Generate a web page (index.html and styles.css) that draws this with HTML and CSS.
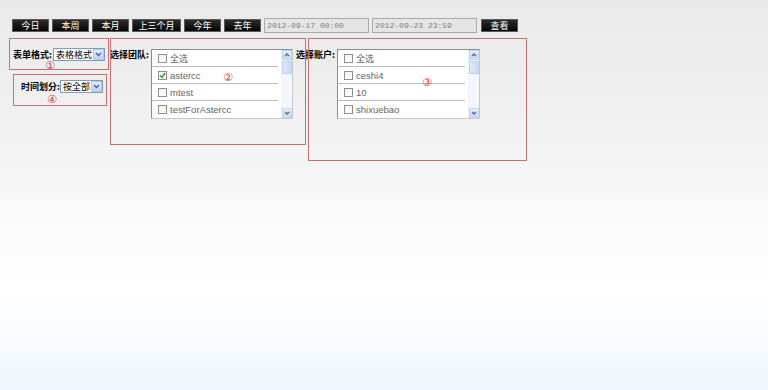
FILE: index.html
```html
<!DOCTYPE html>
<html lang="zh-CN">
<head>
    <meta charset="UTF-8">
    <title>报表查询</title>
    <link rel="stylesheet" href="styles.css">
</head>
<body>
    <div class="toolbar">
        <button class="btn">今日</button>
        <button class="btn">本周</button>
        <button class="btn">本月</button>
        <button class="btn btn-wide">上三个月</button>
        <button class="btn">今年</button>
        <button class="btn">去年</button>
        <span class="date">2012-09-17 00:00</span>
        <span class="date">2012-09-23 23:59</span>
        <button class="btn btn-go">查看</button>
    </div>

    <div class="filters">
        <div class="col-format">
            <div class="field">
                <label class="label label-format">表单格式:</label>
                <span class="combo">表格格式<i class="arrow"><svg width="7" height="5" viewBox="0 0 7 5"><path d="M1 1l2.5 2.5L6 1" stroke="#4a5f8a" stroke-width="1.4" fill="none"/></svg></i></span>
            </div>
            <div class="field field-time">
                <label class="label">时间划分:</label>
                <span class="combo">按全部<i class="arrow"><svg width="7" height="5" viewBox="0 0 7 5"><path d="M1 1l2.5 2.5L6 1" stroke="#4a5f8a" stroke-width="1.4" fill="none"/></svg></i></span>
            </div>
        </div>

        <div class="field-list">
            <label class="label list-label">选择团队:</label>
            <div class="listbox">
                <ul>
                    <li><span class="check"></span><span class="cjk">全选</span></li>
                    <li><span class="check checked"><svg width="7" height="7" viewBox="0 0 7 7"><path d="M1 3.5l2 2L6 1" stroke="#2f9a2f" stroke-width="1.4" fill="none"/></svg></span>astercc</li>
                    <li><span class="check"></span>mtest</li>
                    <li><span class="check"></span>testForAstercc</li>
                </ul>
                <div class="scroll">
                    <span class="sb-btn"><svg width="6" height="4" viewBox="0 0 6 4"><path d="M1 3l2-2 2 2" stroke="#4a6a9a" stroke-width="1.3" fill="none"/></svg></span>
                    <span class="sb-thumb"></span>
                    <span class="sb-track"></span>
                    <span class="sb-btn"><svg width="6" height="4" viewBox="0 0 6 4"><path d="M1 1l2 2 2-2" stroke="#4a6a9a" stroke-width="1.3" fill="none"/></svg></span>
                </div>
            </div>
        </div>

        <div class="field-list field-account">
            <label class="label list-label">选择账户:</label>
            <div class="listbox listbox-wide">
                <ul>
                    <li><span class="check"></span><span class="cjk">全选</span></li>
                    <li><span class="check"></span>ceshi4</li>
                    <li><span class="check"></span>10</li>
                    <li><span class="check"></span>shixuebao</li>
                </ul>
                <div class="scroll">
                    <span class="sb-btn"><svg width="6" height="4" viewBox="0 0 6 4"><path d="M1 3l2-2 2 2" stroke="#4a6a9a" stroke-width="1.3" fill="none"/></svg></span>
                    <span class="sb-thumb"></span>
                    <span class="sb-track"></span>
                    <span class="sb-btn"><svg width="6" height="4" viewBox="0 0 6 4"><path d="M1 1l2 2 2-2" stroke="#4a6a9a" stroke-width="1.3" fill="none"/></svg></span>
                </div>
            </div>
        </div>
    </div>

    <!-- annotation boxes drawn over the form -->
    <div class="mark mark-1"><span class="num">①</span></div>
    <div class="mark mark-2"><span class="num">②</span></div>
    <div class="mark mark-3"><span class="num">③</span></div>
    <div class="mark mark-4"><span class="num">④</span></div>
</body>
</html>
```

FILE: styles.css
```css
html {
    min-height: 100%;
    background: linear-gradient(to bottom, #e9e9e9 0, #f1f1f1 120px, #fafafa 220px, #ffffff 290px, #f0f7fe 390px);
}

body {
    position: relative;
    margin: 0;
    min-height: 390px;
    font-family: "Liberation Sans", "Noto Sans CJK SC", sans-serif;
}

.toolbar {
    display: flex;
    align-items: center;
    gap: 3px;
    height: 15px;
    padding: 18px 0 0 12px;
}

.btn {
    box-sizing: border-box;
    height: 13px;
    padding: 0 8.5px;
    background: linear-gradient(#2b2b2b, #050505);
    border: 1px solid #5a5a5a;
    color: #fff;
    font: 9px/11px "Noto Sans CJK SC", sans-serif;
    cursor: pointer;
}

.btn-wide {
    padding: 0 5.5px;
}

.btn-go {
    margin-left: 1px;
}

.date {
    box-sizing: border-box;
    width: 105px;
    height: 15px;
    padding-left: 2px;
    background: #e5e5e5;
    border: 1px solid #aaaaaa;
    color: #808080;
    font: 8px/13px "Liberation Mono", monospace;
}

.filters {
    display: flex;
    align-items: flex-start;
    margin-top: 15px;
}

.col-format {
    box-sizing: border-box;
    width: 110px;
    padding-left: 13px;
}

.field {
    display: flex;
    align-items: center;
    height: 13px;
}

.field-time {
    margin-top: 19px;
    padding-left: 8px;
}

.label {
    color: #000;
    font: bold 9px/10px "Noto Sans CJK SC", sans-serif;
    white-space: nowrap;
}

.label-format {
    width: 40px;
}

.combo {
    box-sizing: border-box;
    display: flex;
    align-items: center;
    height: 13px;
    padding-left: 2px;
    background: #fff;
    border: 1px solid #7f9db9;
    color: #000;
    font: 9px/11px "Noto Sans CJK SC", sans-serif;
    white-space: nowrap;
}

.arrow {
    display: flex;
    align-items: center;
    justify-content: center;
    width: 11px;
    height: 11px;
    margin-left: 1px;
    box-sizing: border-box;
    background: linear-gradient(#e4edfd, #bfd2f5);
    border: 1px solid #b4c8ef;
}

.field-list {
    display: flex;
    align-items: flex-start;
}

.field-account {
    margin-left: 3px;
}

.list-label {
    width: 41px;
    line-height: 13px;
}

.listbox {
    box-sizing: border-box;
    display: flex;
    width: 142px;
    height: 70px;
    margin-top: 1px;
    background: #fff;
    border: 1px solid #8c8c8c;
    border-right-color: #c9c9c9;
    border-bottom-color: #c9c9c9;
}

.listbox-wide {
    width: 143px;
}

.listbox ul {
    flex: 1;
    margin: 0 3px 0 0;
    padding: 0;
    list-style: none;
}

.listbox li {
    box-sizing: border-box;
    display: flex;
    align-items: center;
    gap: 3px;
    height: 17px;
    padding-left: 6px;
    border-bottom: 1px solid #b9b9b9;
    color: #666;
    font-size: 9.5px;
}

.listbox li:last-child {
    border-bottom: none;
}

.cjk {
    font-family: "Noto Sans CJK SC", sans-serif;
    font-size: 9px;
}

.check {
    box-sizing: border-box;
    display: flex;
    align-items: center;
    justify-content: center;
    width: 9px;
    height: 9px;
    background: linear-gradient(#f2f2f2, #fff);
    border: 1px solid #8f8f8f;
}

.scroll {
    display: flex;
    flex-direction: column;
    width: 10px;
    background: #f4f7fc;
    border-left: 1px solid #eef1f7;
}

.sb-btn {
    box-sizing: border-box;
    display: flex;
    align-items: center;
    justify-content: center;
    height: 10px;
    background: linear-gradient(#e6eefc, #c6d7f6);
    border: 1px solid #c4d4f1;
}

.sb-thumb {
    height: 13px;
    margin-top: 1px;
    background: linear-gradient(to right, #dce7fb, #c9daf7);
    border: 1px solid #c1d2f1;
    box-sizing: border-box;
}

.sb-track {
    flex: 1;
}

.mark {
    position: absolute;
    box-sizing: border-box;
    border: 1px solid #c86e6e;
}

.mark-1 {
    left: 9px;
    top: 38px;
    width: 100px;
    height: 32px;
}

.mark-2 {
    left: 110px;
    top: 38px;
    width: 196px;
    height: 107px;
}

.mark-3 {
    left: 308px;
    top: 38px;
    width: 219px;
    height: 123px;
}

.mark-4 {
    left: 13px;
    top: 74px;
    width: 94px;
    height: 32px;
}

.num {
    position: absolute;
    color: #d23c3c;
    font: 11px/11px "DejaVu Sans", sans-serif;
}

.mark-1 .num {
    left: 35px;
    top: 21px;
}

.mark-2 .num {
    left: 112px;
    top: 33px;
}

.mark-3 .num {
    left: 113px;
    top: 38px;
}

.mark-4 .num {
    left: 33px;
    top: 19px;
}
```
